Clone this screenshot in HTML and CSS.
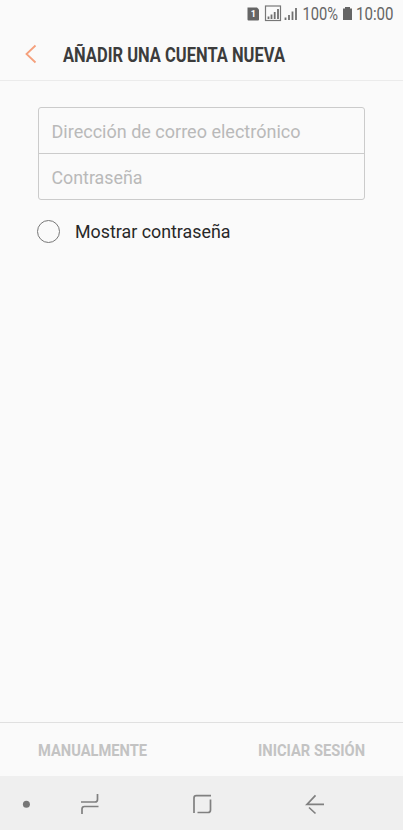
FILE: index.html
```html
<!DOCTYPE html>
<html lang="es">
<head>
<meta charset="utf-8">
<title>Añadir una cuenta nueva</title>
<link rel="stylesheet" href="styles.css">
</head>
<body>
<div class="screen">
  <div class="status">
    <svg class="status-art" width="163" height="28" viewBox="240 0 163 28">
      <path class="solid" d="M247.500 7.500h9.500l2 2v10q0 1-1 1h-9.500q-1 0-1-1z"/>
      <text class="sim" x="250.800" y="17">1</text>
      <rect class="frame" x="265.500" y="6" width="15" height="14.500"/>
      <path class="bars" d="M268.500 16.500v2.500M271.500 14.500v4.500M274.700 12v7M278 9v10M285.500 17.500v2.500M289 15v5M292.500 11.500v8.500M296 8v12"/>
      <text class="status-text" x="302.500" y="19.900" textLength="35.500" lengthAdjust="spacingAndGlyphs">100%</text>
      <path class="solid" d="M345 7h5v1.500h2V20h-9V8.500h2z"/>
      <text class="status-text" x="356" y="19.900" textLength="37.500" lengthAdjust="spacingAndGlyphs">10:00</text>
    </svg>
  </div>
  <header class="header">
    <svg class="back" width="12" height="20" viewBox="0 0 12 20"><path d="M10.500 1.500 1.500 10l9 8.500"/></svg>
    <svg class="title" width="240" height="30"><text x="0" y="22.500" textLength="222" lengthAdjust="spacingAndGlyphs">AÑADIR UNA CUENTA NUEVA</text></svg>
  </header>
  <main class="form">
    <div class="fields">
      <div class="field"><svg width="260" height="28"><text x="-0.500" y="21" textLength="249" lengthAdjust="spacingAndGlyphs">Dirección de correo electrónico</text></svg></div>
      <div class="field"><svg width="260" height="28"><text x="-0.500" y="20.700" textLength="91" lengthAdjust="spacingAndGlyphs">Contraseña</text></svg></div>
    </div>
    <div class="option">
      <span class="circle"></span>
      <svg width="170" height="28"><text x="0" y="21" textLength="155.500" lengthAdjust="spacingAndGlyphs">Mostrar contraseña</text></svg>
    </div>
  </main>
  <footer class="actions">
    <svg width="120" height="28"><text x="0" y="20" textLength="109" lengthAdjust="spacingAndGlyphs">MANUALMENTE</text></svg>
    <svg width="120" height="28"><text x="5" y="20" textLength="107" lengthAdjust="spacingAndGlyphs">INICIAR SESIÓN</text></svg>
  </footer>
  <nav class="nav">
    <svg width="403" height="54" viewBox="0 776 403 54">
      <circle cx="26.400" cy="804.300" r="3.500"/>
      <path d="M81 802h14q2.500 0 2.500-2.500V794M98.500 806.500H84.500q-2.500 0-2.500 2.500v5"/>
      <path d="M194 813v-15q0-2.300 2.300-2.300H211M210.500 799.500V810q0 2.500-2.500 2.500h-10.500"/>
      <path d="M324 804.300h-17l8.500-9M309 807.500l6.500 6"/>
    </svg>
  </nav>
</div>
</body>
</html>
```
FILE: styles.css
```css
* { box-sizing: border-box; }
body { margin: 0; background: #fafafa; font-family: Roboto, sans-serif; }
svg { display: block; flex: none; overflow: visible; }
.screen { width: 403px; height: 830px; display: flex; flex-direction: column; background: #fafafa; }
.status { height: 28px; display: flex; justify-content: flex-end; }
.solid { fill: #656565; }
.sim { fill: #fff; font-size: 9px; font-weight: 700; }
.frame { fill: none; stroke: #777; stroke-width: 1.2; }
.bars { fill: none; stroke: #707070; stroke-width: 1.8; }
.status-text { fill: #656565; font-size: 17.500px; }
.header { height: 53px; display: flex; align-items: center; padding-left: 25px; gap: 26px; border-bottom: 1px solid #ebebeb; }
.back path { fill: none; stroke: #f5a07c; stroke-width: 1.8; }
.title text { fill: #3c3c3c; font-size: 19.500px; font-weight: 700; }
.form { flex: 1; padding: 26px 38px 0; }
.fields { height: 93px; border: 1px solid #cbcbcb; border-radius: 3px; }
.field { height: 45px; padding: 9px 0 0 13px; }
.field + .field { height: 46px; border-top: 1px solid #cbcbcb; }
.field text { fill: #b9b9b9; font-size: 18px; }
.option { display: flex; align-items: center; gap: 15px; margin: 17px 0 0 -1px; }
.circle { width: 23px; height: 23px; border: 1.200px solid #777; border-radius: 50%; }
.option text { fill: #282828; font-size: 18px; }
.actions { height: 54px; border-top: 1px solid #e0e0e0; padding: 0 30px 0 38px; display: flex; align-items: center; justify-content: space-between; }
.actions text { fill: #c3c3c3; font-size: 17px; font-weight: 700; }
.nav { height: 54px; background: #efefef; }
.nav path { fill: none; stroke: #808080; stroke-width: 1.700; }
.nav circle { fill: #777; }
```
